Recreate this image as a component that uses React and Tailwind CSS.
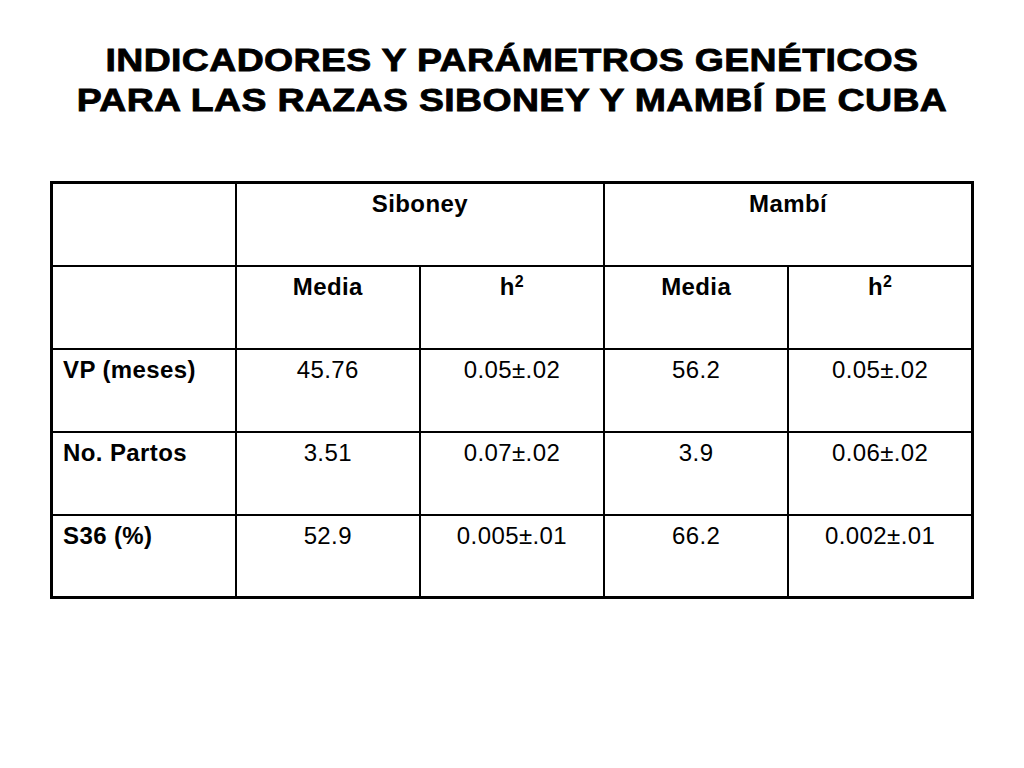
import React from 'react';

const rows = [
    { label: 'VP (meses)', values: ['45.76', '0.05±.02', '56.2', '0.05±.02'] },
    { label: 'No. Partos', values: ['3.51', '0.07±.02', '3.9', '0.06±.02'] },
    { label: 'S36 (%)', values: ['52.9', '0.005±.01', '66.2', '0.002±.01'] },
];

export default function App() {
    const cell = 'border-2 border-black h-[83px] align-top pt-[6px] text-[24px] leading-[28px] tracking-[0.4px]';

    return (
        <div className="w-[1024px] h-[768px] bg-white text-black font-['Liberation_Sans',Arial,sans-serif] overflow-hidden">
            {/* Titulo */}
            <h1 className="pt-[40px] text-center font-bold text-[32px] leading-[40px] tracking-[0.3px] scale-x-[1.17] [-webkit-text-stroke:0.8px_black]">
                INDICADORES Y PARÁMETROS GENÉTICOS
                <br />
                PARA LAS RAZAS SIBONEY Y MAMBÍ DE CUBA
            </h1>

            {/* Tabla */}
            <div className="mt-[61px] px-[50px]">
                <table className="w-[924px] table-fixed border-collapse border-[3px] border-black">
                    <tbody>
                        <tr>
                            <td className={cell}></td>
                            <td colSpan={2} className={cell + ' text-center font-bold'}>Siboney</td>
                            <td colSpan={2} className={cell + ' text-center font-bold'}>Mambí</td>
                        </tr>
                        <tr>
                            <td className={cell}></td>
                            <td className={cell + ' text-center font-bold'}>Media</td>
                            <td className={cell + ' text-center font-bold'}>h<sup className="text-[16px]">2</sup></td>
                            <td className={cell + ' text-center font-bold'}>Media</td>
                            <td className={cell + ' text-center font-bold'}>h<sup className="text-[16px]">2</sup></td>
                        </tr>
                        {rows.map((row, index) => (
                            <tr key={index}>
                                <td className={cell + ' pl-[10px] font-bold'}>{row.label}</td>
                                {row.values.map((v, i) => (
                                    <td key={i} className={cell + ' text-center'}>{v}</td>
                                ))}
                            </tr>
                        ))}
                    </tbody>
                </table>
            </div>
        </div>
    );
}
